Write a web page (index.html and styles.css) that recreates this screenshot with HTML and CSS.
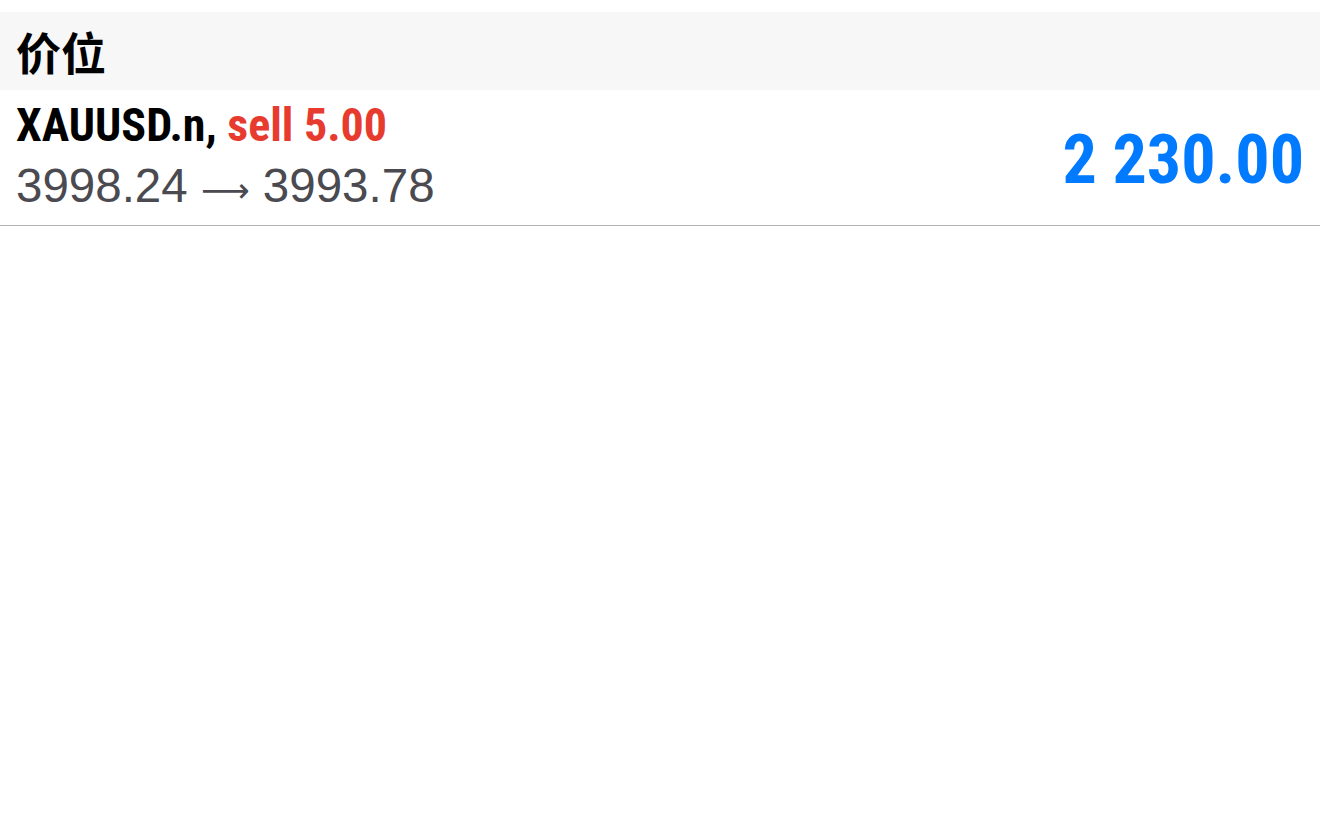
FILE: index.html
```html
<!DOCTYPE html>
<html lang="zh">
<head>
  <meta charset="UTF-8" />
  <title>价位</title>
  <link rel="stylesheet" href="styles.css">
</head>
<body>
  <div class="section-head">价位</div>
  <div class="deal-row">
    <div class="deal-info">
      <div class="deal-title">XAUUSD.n, <span class="deal-type">sell 5.00</span></div>
      <div class="deal-prices">3998.24 <span class="arrow">⟶</span> 3993.78</div>
    </div>
    <div class="deal-profit">2 230.00</div>
  </div>
</body>
</html>
```

FILE: styles.css
```css
body {
  margin: 0;
  padding-top: 12px;
  background: #fff;
  font-family: "Liberation Sans", Arial, "Noto Sans CJK SC", sans-serif;
  color: #000;
}
.section-head {
  background: #f7f7f7;
  height: 78px;
  padding: 0 16px;
  display: flex;
  align-items: center;
  font-family: "Noto Sans CJK SC", sans-serif;
  font-weight: bold;
  font-size: 45px;
}
.deal-row {
  display: flex;
  align-items: center;
  justify-content: space-between;
  height: 135px;
  padding: 0 16px;
  border-bottom: 1px solid #b2b2b2;
}
.deal-title {
  font-family: "Roboto Condensed", "Liberation Sans", sans-serif;
  font-weight: bold;
  font-size: 46px;
  line-height: 50px;
  margin-top: 2px;
}
.deal-type {
  color: #e63b2e;
}
.deal-prices {
  margin-top: 8px;
  font-size: 47.5px;
  line-height: 56px;
  color: #4a4a50;
}
.arrow {
  font-family: "DejaVu Sans", sans-serif;
  font-size: 34px;
}
.deal-profit {
  font-family: "Roboto Condensed", "Liberation Sans", sans-serif;
  font-weight: bold;
  font-size: 68px;
  line-height: 68px;
  margin-top: 4px;
  color: #007aff;
}
```
